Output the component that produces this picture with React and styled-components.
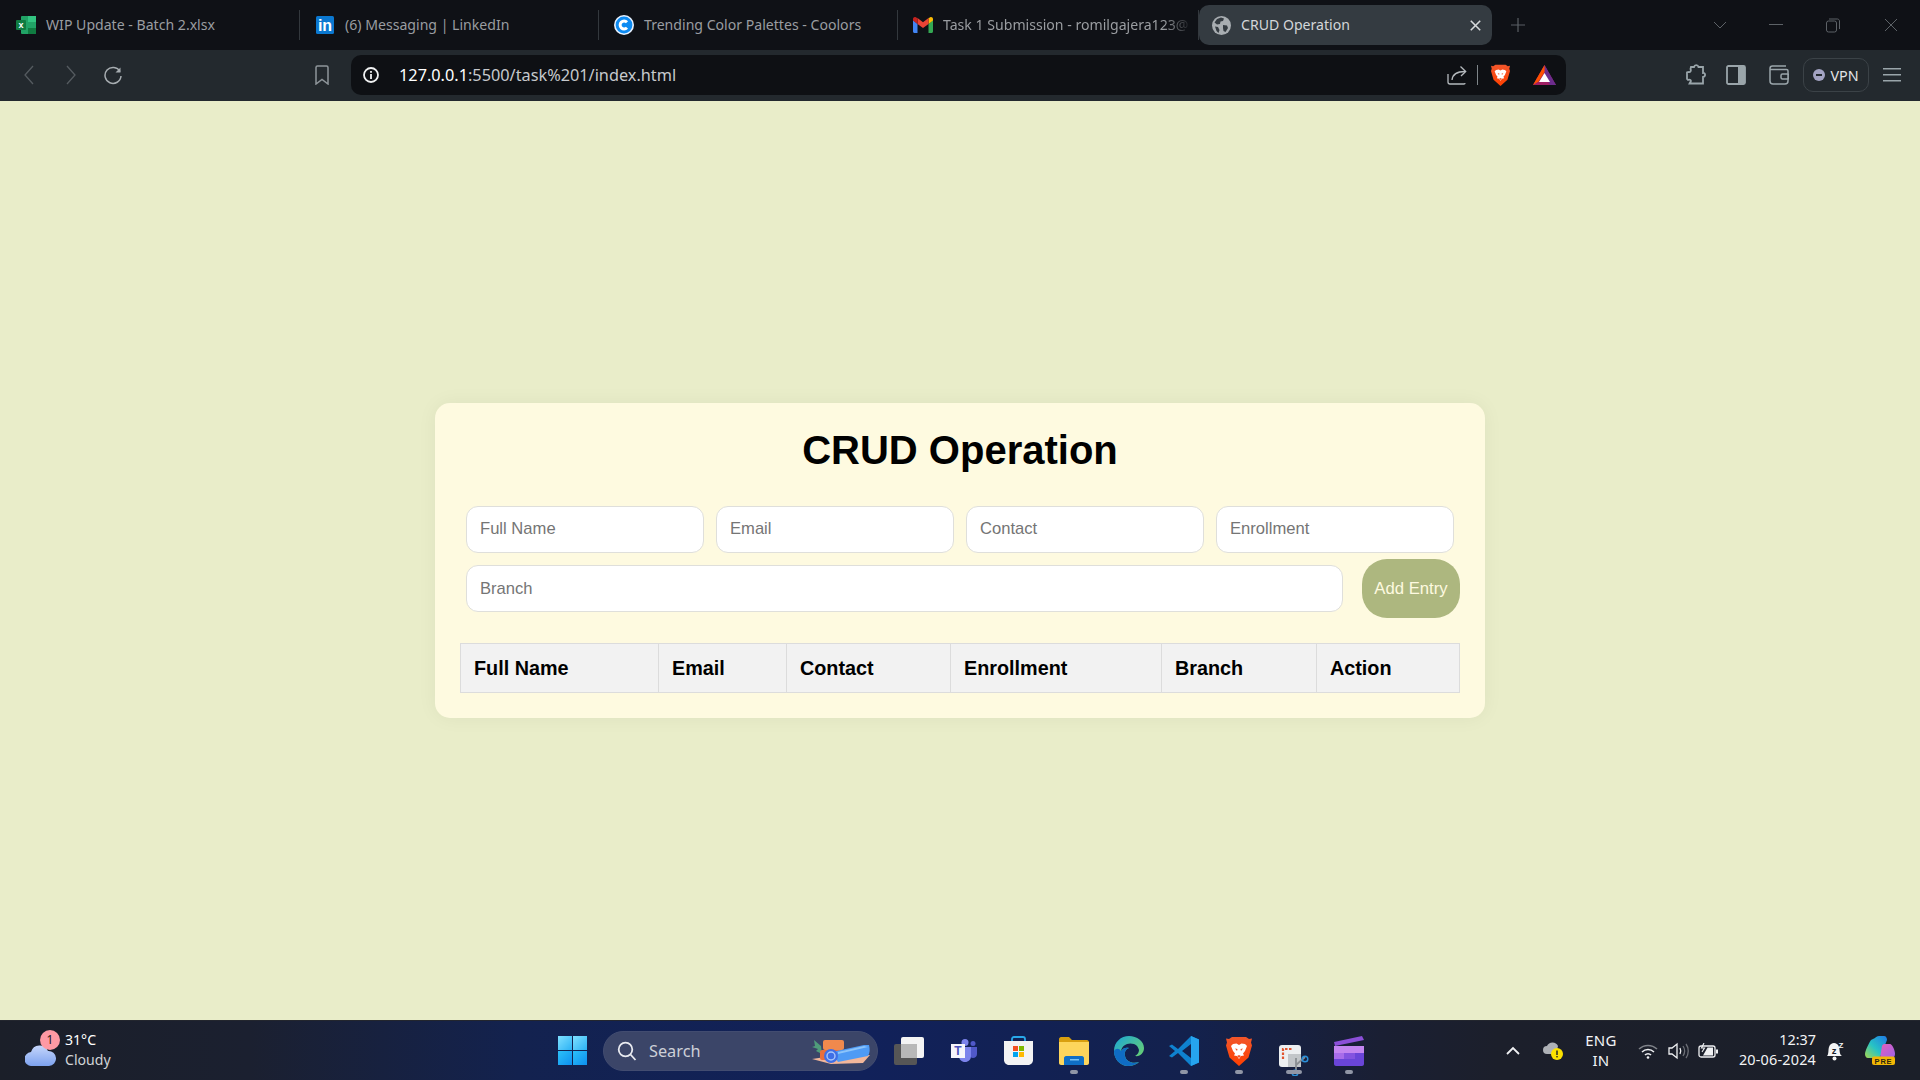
import React from "react";
import styled, { createGlobalStyle } from "styled-components";

const GlobalStyle = createGlobalStyle`
  html, body {
    margin: 0;
    padding: 0;
    height: 100%;
    overflow: hidden;
  }
  #root {
    height: 100%;
  }
  * {
    box-sizing: border-box;
  }
`;

const Screen = styled.div`
  width: 1920px;
  height: 1080px;
  display: flex;
  flex-direction: column;
  font-family: "Noto Sans", sans-serif;
`;

/* browser chrome */
const TabBar = styled.div`
  height: 50px;
  background-color: #0f1116;
  display: flex;
  align-items: center;
  flex-shrink: 0;
`;
const Tab = styled.div`
  position: relative;
  width: ${(p) => p.$w}px;
  height: 40px;
  padding-left: ${(p) => p.$pad || 15}px;
  display: flex;
  align-items: center;
  gap: 10px;
  color: #9a9da1;
  font-size: 14.1px;
  white-space: nowrap;
  &::after {
    content: "";
    position: absolute;
    right: 0;
    top: 5px;
    width: 1px;
    height: 30px;
    background-color: #33383d;
  }
`;
const ActiveTab = styled.div`
  width: 293px;
  height: 40px;
  padding: 0 11px 0 13px;
  border-radius: 10px;
  background-color: #343b41;
  color: #d3d6d9;
  font-size: 14.1px;
  display: flex;
  align-items: center;
  gap: 10px;
`;
const TabTitle = styled.span`
  flex: 1;
  margin-bottom: 2px;
`;
const PlainTitle = styled.span`
  margin-bottom: 2px;
`;
const FadedTitle = styled(PlainTitle)`
  -webkit-mask-image: linear-gradient(90deg, #000 90%, rgba(0, 0, 0, 0.15) 100%);
  mask-image: linear-gradient(90deg, #000 90%, rgba(0, 0, 0, 0.15) 100%);
`;
const Spacer = styled.div`
  flex: 1;
`;
const Slot = styled.div`
  width: ${(p) => p.$w}px;
  height: 100%;
  flex-shrink: 0;
  display: flex;
  align-items: center;
  justify-content: center;
`;
const ToolBar = styled.div`
  height: 51px;
  background-color: #23292e;
  padding: 0 0 1px 8px;
  display: flex;
  align-items: center;
  flex-shrink: 0;
`;
const NavGap = styled.div`
  width: 169px;
`;
const UrlBar = styled.div`
  width: 1215px;
  height: 40px;
  margin-left: 9px;
  border-radius: 10px;
  background-color: #0e1014;
  padding-left: 11px;
  display: flex;
  align-items: center;
`;
const InfoIcon = styled.div`
  width: 18px;
  display: flex;
  margin-right: 19px;
`;
const UrlText = styled.div`
  font-size: 16.3px;
  color: #c6c9cc;
  b {
    font-weight: 400;
    color: #ffffff;
  }
`;
const UrlTools = styled.div`
  display: flex;
  align-items: center;
  height: 100%;
  margin-right: 10px;
`;
const UrlDivider = styled.div`
  width: 1px;
  height: 20px;
  background-color: #7e8589;
  margin: 0 13px 0 10px;
`;
const VpnPill = styled.div`
  width: 66px;
  height: 34px;
  margin-left: 1px;
  border: 1px solid #3b4247;
  border-radius: 10px;
  display: flex;
  align-items: center;
  justify-content: center;
  gap: 5px;
  color: #e3e5e7;
  font-size: 14.3px;
`;
const VpnDot = styled.span`
  position: relative;
  width: 12px;
  height: 12px;
  border-radius: 50%;
  background-color: #a3a3c2;
  &::after {
    content: "";
    position: absolute;
    left: 3px;
    top: 5px;
    width: 6px;
    height: 2px;
    background-color: #23292e;
  }
`;

/* page */
const Main = styled.main`
  flex: 1;
  background-color: #e9edc9;
  display: flex;
  align-items: center;
  justify-content: center;
`;
const Card = styled.section`
  width: 1050px;
  padding: 25px;
  border-radius: 15px;
  background-color: #fefae0;
  box-shadow: 0 0 20px rgba(0, 0, 0, 0.05);
  font-family: "Liberation Sans", Arial, sans-serif;
`;
const Heading = styled.h1`
  margin: 0 0 34px;
  font-size: 40px;
  font-weight: 700;
  line-height: 44px;
  text-align: center;
  color: #000000;
`;
const FieldRow = styled.div`
  display: flex;
  gap: 12px;
  padding-left: 6px;
`;
const BranchRow = styled.div`
  display: flex;
  align-items: center;
  padding-left: 6px;
  margin-top: 6px;
`;
const Field = styled.input`
  width: ${(p) => p.$w}px;
  height: 47px;
  padding: 0 13px ${(p) => (p.$raised ? 2 : 0)}px;
  border: 1px solid #dfdfdb;
  border-radius: 12px;
  background-color: #ffffff;
  font-family: inherit;
  font-size: 16.6px;
  outline: none;
  &::placeholder {
    color: #757575;
    opacity: 1;
  }
`;
const AddButton = styled.button`
  width: 98px;
  height: 59px;
  margin-left: 19px;
  border: none;
  border-radius: 25px;
  background-color: #adb77f;
  color: #fefae0;
  font-family: inherit;
  font-size: 16.7px;
  padding: 0;
`;
const Table = styled.table`
  width: 999px;
  margin-top: 25px;
  border-collapse: collapse;
  table-layout: fixed;
`;
const HeadCell = styled.th`
  width: ${(p) => p.$w}px;
  height: 49px;
  padding: 0 13px;
  border: 1px solid #dcdcdc;
  background-color: #f2f2f2;
  color: #000000;
  font-size: 19.8px;
  font-weight: 700;
  text-align: left;
`;

/* taskbar */
const TaskBar = styled.footer`
  height: 60px;
  flex-shrink: 0;
  border-top: 1px solid #23262e;
  background: linear-gradient(90deg, #1b1f29 0%, #1b2030 13%, #13224f 27%, #11215a 45%, #13214d 62%, #1a1f33 72%, #1c1f2b 78%, #1b1f29 100%);
  display: flex;
  align-items: center;
`;
const WeatherBlock = styled.div`
  width: 558px;
  height: 100%;
  padding-left: 25px;
  display: flex;
  align-items: center;
  gap: 9px;
`;
const WeatherIcon = styled.div`
  position: relative;
  width: 31px;
  height: 30px;
  display: flex;
  align-items: flex-end;
`;
const WeatherBadge = styled.span`
  position: absolute;
  left: 15px;
  top: -6px;
  width: 20px;
  height: 20px;
  border-radius: 50%;
  background-color: #ff99a4;
  color: #1a1a1a;
  font-size: 12px;
  line-height: 20px;
  text-align: center;
`;
const WeatherText = styled.div`
  margin-bottom: 2px;
  font-size: 14.1px;
  line-height: 20px;
  color: #d0d3d6;
  b {
    display: block;
    font-weight: 400;
    color: #ffffff;
  }
`;
const StartIcon = styled.div`
  width: 29px;
  display: flex;
  margin-right: 16px;
`;
const SearchBox = styled.div`
  width: 275px;
  height: 40px;
  margin-right: 3px;
  padding-left: 13px;
  border: 1px solid #424c70;
  border-radius: 20px;
  background-color: #3b4568;
  color: #cdd0d8;
  font-size: 16.3px;
  display: flex;
  align-items: center;
  gap: 12px;
`;
const SearchArt = styled.div`
  margin-left: auto;
  margin-right: 7px;
  display: flex;
`;
const AppSlot = styled.div`
  position: relative;
  width: 55px;
  height: 100%;
  flex-shrink: 0;
  display: flex;
  align-items: ${(p) => (p.$low ? "flex-end" : "center")};
  justify-content: center;
  padding-bottom: ${(p) => (p.$low ? 4 : 0)}px;
  &::after {
    content: "";
    display: ${(p) => (p.$open ? "block" : "none")};
    position: absolute;
    left: 50%;
    bottom: 6px;
    width: ${(p) => (p.$wide ? 16 : 8)}px;
    height: 4px;
    margin-left: ${(p) => (p.$wide ? -8 : -4)}px;
    border-radius: 2px;
    background-color: #9096a6;
  }
`;
const Tray = styled.div`
  height: 100%;
  margin-right: 14px;
  display: flex;
  align-items: center;
`;
const TrayLang = styled.div`
  width: 56px;
  margin-bottom: 2px;
  color: #f2f3f5;
  font-size: 15px;
  line-height: 20px;
  letter-spacing: 0.3px;
  text-align: center;
`;
const Clock = styled.div`
  width: 89px;
  flex-shrink: 0;
  margin-bottom: 2px;
  color: #f2f3f5;
  font-size: 14.4px;
  line-height: 20px;
  text-align: right;
  white-space: nowrap;
  span {
    letter-spacing: 0.2px;
  }
`;

/* icons */
const ExcelIcon = () => (
  <svg width="20" height="18" viewBox="0 0 20 18">
    <rect x="5" y="0" width="15" height="18" rx="1" fill="#21a366" />
    <rect x="12" y="0" width="8" height="6" fill="#33c481" />
    <rect x="12" y="12" width="8" height="6" fill="#107c41" />
    <rect x="0" y="4" width="10" height="10" rx="1" fill="#107c41" />
    <text x="5" y="12" fontSize="9" fontWeight="700" textAnchor="middle" fill="#fff" fontFamily="Liberation Sans">x</text>
  </svg>
);
const LinkedinIcon = () => (
  <svg width="18" height="18" viewBox="0 0 18 18" style={{ marginRight: 1 }}>
    <rect width="18" height="18" rx="1.5" fill="#0b78d0" />
    <text x="9" y="15" fontSize="16" fontWeight="700" textAnchor="middle" fill="#fff" fontFamily="Liberation Sans">in</text>
  </svg>
);
const CoolorsIcon = () => (
  <svg width="20" height="20" viewBox="0 0 20 20">
    <circle cx="10" cy="10" r="10" fill="#e8f2ff" />
    <circle cx="10" cy="10" r="8.4" fill="#0d8bf2" />
    <path d="M13 7.2a4 4 0 1 0 0 5.6" fill="none" stroke="#fff" strokeWidth="3" />
  </svg>
);
const GmailIcon = () => (
  <svg width="20" height="16" viewBox="0 0 20 16">
    <path d="M0 3v11.5c0 .8.7 1.5 1.5 1.5H4.5V7z" fill="#4285f4" />
    <path d="M20 3v11.5c0 .8-.7 1.5-1.5 1.5H15.500V7z" fill="#34a853" />
    <path d="M15.500 1v6L20 3.500V2C20 .3 18 -.5 17 .5z" fill="#fbbc04" />
    <path d="M4.500 7V1l5.500 4.200L15.500 1v6L10 11z" fill="#ea4335" />
    <path d="M0 2v1.500L4.500 7V1L3 .5C2 -.5 0 .3 0 2z" fill="#c5221f" />
  </svg>
);
const GlobeIcon = () => (
  <svg width="19" height="19" viewBox="0 0 19 19">
    <circle cx="9.500" cy="9.500" r="9.500" fill="#a8adb1" />
    <path d="M5 3l4-1.500 3 1-1 2.500-2.500.5-.5 2.500-3 .5-2.500-2zM11 9l4 .5 1 2.500-2.500 4-2-1-.5-3zM3 10.500l3 .5 1.500 3-1 3-2-2z" fill="#343b41" />
  </svg>
);
const Chevron = ({ dir, color }) => (
  <svg width="12" height="20" viewBox="0 0 12 20" fill="none" stroke={color} strokeWidth="1.300">
    <path d={dir === "left" ? "M10 1 2 10l8 9" : "M2 1l8 9-8 9"} />
  </svg>
);
const ReloadIcon = () => (
  <svg width="20" height="20" viewBox="0 0 20 20" fill="none" stroke="#a7adb1" strokeWidth="1.500">
    <path d="M17 6.500A8 8 0 1 0 18 11" />
    <path d="M17.500 2.500v5h-5" fill="#a7adb1" stroke="none" />
  </svg>
);
const BookmarkIcon = () => (
  <svg width="14" height="20" viewBox="0 0 14 20" fill="none" stroke="#8e959a" strokeWidth="1.500">
    <path d="M1 2.500C1 1.500 1.700 1 2.500 1h9c.8 0 1.500.5 1.500 1.500V19l-6-4.500L1 19z" />
  </svg>
);
const InfoGlyph = () => (
  <svg width="18" height="18" viewBox="0 0 18 18" fill="none">
    <circle cx="9" cy="9" r="7" stroke="#f0f1f2" strokeWidth="1.800" />
    <rect x="8.100" y="8" width="1.800" height="5" fill="#f0f1f2" />
    <rect x="8.100" y="5" width="1.800" height="1.800" fill="#f0f1f2" />
  </svg>
);
const ShareIcon = () => (
  <svg width="20" height="20" viewBox="0 0 20 20" fill="none" stroke="#b4b9bd" strokeWidth="1.300">
    <path d="M1 9v8c0 1.200.8 2 2 2h14c.6 0 1-.4 1-1" />
    <path d="M5 15c.5-5 4-8.500 13-8.500" />
    <path d="M13.500 1.500 18.700 6.500 14 11" />
  </svg>
);
const BraveIcon = ({ w, h }) => (
  <svg width={w} height={h} viewBox="0 0 26 30">
    <defs>
      <linearGradient id={`brave${w}`} x1="0" y1="0" x2="0" y2="1">
        <stop offset="0" stopColor="#f1562b" />
        <stop offset="1" stopColor="#ff4000" />
      </linearGradient>
    </defs>
    <path d="M6 1h14l3 2 3-.5-1 4 1 3-3.500 12L13 30 3.500 21.500 0 9.500l1-3-1-4 3 .5z" fill={`url(#brave${w})`} />
    <path d="M7 8l3.500-.5L13 9l2.500-1.500L19 8l2 2-2 5-2 2.500 1 2-3 .5-2 3-2-3-3-.5 1-2L7 15l-2-5z" fill="#fff" />
    <path d="M9 12.500l2.500.5-.5 2zM17 12.500l-2.500.5.5 2zM11 20l2-1 2 1-2 2z" fill="#f1562b" />
  </svg>
);
const BatIcon = () => (
  <svg width="23" height="20" viewBox="0 0 23 20">
    <path d="M11.500 0 23 20H0z" fill="#9e1f63" />
    <path d="M11.500 0 23 20l-6-0-5.500-10z" fill="#662d91" opacity="0.900" />
    <path d="M11.500 0 0 20l5.500-3.500L11.500 7z" fill="#ff5000" />
    <path d="M11.500 8 17 17H6z" fill="#fff" />
  </svg>
);
const PuzzleIcon = () => (
  <svg width="21" height="22" viewBox="0 0 21 22" fill="none" stroke="#9aa5aa" strokeWidth="1.800">
    <path d="M5 3h3c.5-2.500 4-2.500 4.500 0H17v6c2.500-.5 3 3.500 0 4v6.500H3.500l.5-1c2-2 0-3.500-2-2.500L1 15V8.500l1.500-.5c2 .5 3-1.500 2-3z" />
  </svg>
);
const SidebarIcon = () => (
  <svg width="20" height="20" viewBox="0 0 20 20">
    <rect x="1" y="1" width="18" height="18" rx="1.500" fill="none" stroke="#9aa5aa" strokeWidth="1.800" />
    <rect x="12" y="1" width="7" height="18" fill="#9aa5aa" />
  </svg>
);
const WalletIcon = () => (
  <svg width="20" height="20" viewBox="0 0 20 20" fill="none" stroke="#9aa5aa" strokeWidth="1.500">
    <path d="M17 1H3.500C2 1 1 2 1 3.500V16c0 1.500 1 3 3 3h12c2 0 3-1 3-3V6c0-1-.8-1.500-1.500-1.500H1.500" />
    <rect x="12" y="9" width="8" height="5" rx="1.500" />
  </svg>
);
const MenuIcon = () => (
  <svg width="18" height="14" viewBox="0 0 18 14" fill="#9aa5aa">
    <rect width="18" height="1.500" />
    <rect y="6" width="18" height="1.500" />
    <rect y="12" width="18" height="1.500" />
  </svg>
);
const CloseSmall = ({ color, size, weight }) => (
  <svg width={size} height={size} viewBox="0 0 14 14" fill="none" stroke={color} strokeWidth={weight}>
    <path d="M1 1l12 12M13 1 1 13" />
  </svg>
);
const PlusIcon = () => (
  <svg width="14" height="14" viewBox="0 0 14 14" stroke="#5a5f64" strokeWidth="1.200">
    <path d="M7 0v14M0 7h14" />
  </svg>
);
const WindowDown = () => (
  <svg width="14" height="8" viewBox="0 0 14 8" fill="none" stroke="#5d6267" strokeWidth="1">
    <path d="M1 1l6 6 6-6" />
  </svg>
);
const WindowMin = () => (
  <svg width="14" height="2" viewBox="0 0 14 2"><rect width="14" height="1" fill="#5d6267" /></svg>
);
const WindowRestore = () => (
  <svg width="14" height="15" viewBox="0 0 14 15" fill="none" stroke="#5d6267" strokeWidth="1">
    <rect x=".5" y="3" width="10" height="11" rx="2" />
    <path d="M3 1h8.500c1 0 2 1 2 2v8" />
  </svg>
);

const CloudIcon = () => (
  <svg width="31" height="22" viewBox="0 0 31 22">
    <defs>
      <linearGradient id="cloudFill" x1="0" y1="0" x2="0" y2="1">
        <stop offset="0" stopColor="#c6d6fb" />
        <stop offset="1" stopColor="#7da2ef" />
      </linearGradient>
    </defs>
    <path d="M7 22a7 7 0 0 1-1-14 9 9 0 0 1 17-1 7.500 7.500 0 0 1 1 15z" fill="url(#cloudFill)" />
  </svg>
);
const WindowsIcon = () => (
  <svg width="29" height="29" viewBox="0 0 29 29">
    <defs>
      <linearGradient id="winTop" x1="0" y1="0" x2="1" y2="1">
        <stop offset="0" stopColor="#7fe0ff" />
        <stop offset="1" stopColor="#2bb2f5" />
      </linearGradient>
      <linearGradient id="winBottom" x1="0" y1="0" x2="1" y2="1">
        <stop offset="0" stopColor="#2cc0f8" />
        <stop offset="1" stopColor="#0d90f0" />
      </linearGradient>
    </defs>
    <rect width="14" height="14" fill="url(#winTop)" />
    <rect x="15" width="14" height="14" fill="url(#winTop)" />
    <rect y="15" width="14" height="14" fill="url(#winBottom)" />
    <rect x="15" y="15" width="14" height="14" fill="url(#winBottom)" />
  </svg>
);
const SearchGlyph = () => (
  <svg width="20" height="20" viewBox="0 0 20 20" fill="none" stroke="#e8eaf0" strokeWidth="1.800">
    <circle cx="8.500" cy="8.500" r="6.800" />
    <path d="M13.500 13.500 18.500 19" />
  </svg>
);
const SearchArtIcon = () => (
  <svg width="58" height="26" viewBox="0 0 58 26">
    <path d="M0 21l20-3 38-1-7 8-32 1z" fill="#f3b79a" />
    <path d="M2 2l7 6 1 8-6-3 2-2-6-2 3-1z" fill="#4f9c7a" />
    <rect x="11" y="2" width="21" height="10" rx="2" fill="#f0894d" />
    <rect x="8" y="12" width="22" height="10" rx="2" fill="#e86f3d" />
    <path d="M20 14 52 7l5 0c1 4 1 8-1 11l-30 6z" fill="#4f9bf5" />
    <path d="M26 14 52 8l4 1-30 7z" fill="#8cc4fa" />
    <circle cx="19" cy="18" r="7" fill="#3f6fe6" />
    <circle cx="19" cy="18" r="4" fill="none" stroke="#a9c6fb" strokeWidth="1.400" />
  </svg>
);
const TaskViewIcon = () => (
  <svg width="30" height="28" viewBox="0 0 30 28">
    <rect y="7" width="23" height="21" rx="2" fill="#565656" />
    <rect x="7" width="23" height="21" rx="2" fill="#f4f4f4" />
    <rect x="7" y="7" width="16" height="14" fill="#b8b8b8" />
  </svg>
);
const TeamsIcon = () => (
  <svg width="26" height="23" viewBox="0 0 26 23">
    <circle cx="14" cy="3.500" r="3.500" fill="#7b83eb" />
    <circle cx="22" cy="4.500" r="2.500" fill="#5059c9" />
    <path d="M18 8h8v7c0 2.500-2 4-4 4s-4-2-4-4z" fill="#5059c9" />
    <path d="M8 8h12v9c0 3.500-2.500 6-6 6s-6-2.500-6-6z" fill="#7b83eb" />
    <rect y="5" width="14" height="14" fill="#f5f5fb" />
    <text x="7" y="16" fontSize="12" fontWeight="700" textAnchor="middle" fill="#4b53bc" fontFamily="Liberation Sans">T</text>
  </svg>
);
const StoreIcon = () => (
  <svg width="29" height="29" viewBox="0 0 29 29">
    <path d="M8 7V3c0-1 .8-2 2-2h9c1.200 0 2 1 2 2v4" fill="none" stroke="#28a8ea" strokeWidth="1.800" />
    <path d="M0 5h29v19c0 2.500-2 5-5 5H5c-3 0-5-2.500-5-5z" fill="#f3f3f3" />
    <rect x="9" y="10" width="5" height="5" fill="#f25022" />
    <rect x="15" y="10" width="5" height="5" fill="#7fba00" />
    <rect x="9" y="16" width="5" height="5" fill="#00a4ef" />
    <rect x="15" y="16" width="5" height="5" fill="#ffb900" />
  </svg>
);
const ExplorerIcon = () => (
  <svg width="30" height="28" viewBox="0 0 30 28">
    <path d="M0 2c0-1 1-2 2-2h8l3 3h15c1 0 2 1 2 2v5H0z" fill="#d99f0f" />
    <path d="M0 5h30v21c0 1-1 2-2 2H2c-1 0-2-1-2-2z" fill="#fdd55c" />
    <path d="M5 21c0-1 1-2 2-2h16c1 0 2 1 2 2v7H5z" fill="#0f6fc6" />
    <rect x="11" y="22" width="9" height="1.500" fill="#78c3f5" />
  </svg>
);
const EdgeIcon = () => (
  <svg width="30" height="30" viewBox="0 0 30 30">
    <defs>
      <linearGradient id="edgeTop" x1="0" y1="0" x2="1" y2="1">
        <stop offset="0" stopColor="#1aa7d8" />
        <stop offset="1" stopColor="#7ad85b" />
      </linearGradient>
    </defs>
    <path d="M15 0C7 0 0 6 0 15c0 8 6 15 14 15 5 0 9-2 11-4-6 2-13 0-14-6-1-4 1-7 4-8-3-1-6 0-8 3 1-6 7-9 13-7 3 1 4 3 5 6 0 3-2 5-4 6 5 1 9-3 9-8C30 5 23 0 15 0z" fill="url(#edgeTop)" />
    <path d="M0 15c0 8 6 15 14 15 5 0 9-2 11-4-6 2-13 0-14-6-1-4 1-7 4-8-3-1-6 0-8 3C5 12 2 12 0 15z" fill="#0f6cc4" />
  </svg>
);
const VsCodeIcon = () => (
  <svg width="30" height="30" viewBox="0 0 30 30">
    <path d="M22 0 9 13 3 8.500 0 10l6 5-6 5 3 1.500L9 17l13 13 8-3.500V3.500zM22 8v14l-9-7z" fill="#0f82cf" />
    <path d="M22 0l8 3.500v23L22 30z" fill="#26a4ee" />
  </svg>
);
const SnipIcon = () => (
  <svg width="30" height="31" viewBox="0 0 30 31">
    <rect width="22" height="22" rx="3" fill="#eceff1" />
    <path d="M4 14V4h10" fill="none" stroke="#e2552f" strokeWidth="2.200" strokeDasharray="2.500 1.500" />
    <path d="M9 9h13v13H9z" fill="#c2c6c9" />
    <path d="M17 13v12M17 20l9-8" stroke="#8a8f93" strokeWidth="1.800" />
    <circle cx="26" cy="14" r="2.800" fill="none" stroke="#2a8fd8" strokeWidth="1.500" />
    <circle cx="16" cy="28" r="2.800" fill="none" stroke="#2a8fd8" strokeWidth="1.500" />
  </svg>
);
const ClapperIcon = () => (
  <svg width="30" height="30" viewBox="0 0 30 30">
    <path d="M0 6 28 0l2 4L1 10z" fill="#8b4fd8" />
    <path d="M0 10h30v18c0 1-1 2-2 2H2c-1 0-2-1-2-2z" fill="#6a45d8" />
    <path d="M0 10h30v7H0z" fill="#c385f0" />
    <path d="M0 17h10v6H0z" fill="#a86cea" />
    <path d="M10 17h11v6H10z" fill="#8453e0" />
  </svg>
);
const CaretIcon = () => (
  <svg width="14" height="9" viewBox="0 0 14 9" fill="none" stroke="#f0f1f3" strokeWidth="1.800">
    <path d="M1 8l6-6 6 6" />
  </svg>
);
const SyncWarnIcon = () => (
  <svg width="20" height="18" viewBox="0 0 20 18">
    <path d="M4 12a4 4 0 0 1 0-8 6 6 0 0 1 11 0l-2 8z" fill="#aeb1b6" />
    <circle cx="14" cy="12" r="6" fill="#fce100" />
    <rect x="13.300" y="8.500" width="1.400" height="4.500" fill="#1b1f29" />
    <rect x="13.300" y="14" width="1.400" height="1.400" fill="#1b1f29" />
  </svg>
);
const WifiIcon = () => (
  <svg width="20" height="16" viewBox="0 0 20 16" fill="none" strokeWidth="1.500">
    <path d="M1 6a13 13 0 0 1 18 0" stroke="#7e8188" />
    <path d="M4 9a8.500 8.500 0 0 1 12 0" stroke="#f0f1f3" />
    <path d="M7 12a4 4 0 0 1 6 0" stroke="#f0f1f3" />
    <circle cx="10" cy="14.500" r="1.300" fill="#f0f1f3" stroke="none" />
  </svg>
);
const VolumeIcon = () => (
  <svg width="21" height="18" viewBox="0 0 21 18" fill="none" strokeWidth="1.300">
    <path d="M1 6h3l5-4v14l-5-4H1z" stroke="#f0f1f3" />
    <path d="M12 6c1 2 1 4 0 6" stroke="#f0f1f3" />
    <path d="M15 4c2 3 2 7 0 10M18 2c3 4 3 10 0 14" stroke="#6c6f76" />
  </svg>
);
const BatteryIcon = () => (
  <svg width="21" height="16" viewBox="0 0 21 16" fill="none" stroke="#f0f1f3" strokeWidth="1.300">
    <rect x="1" y="3" width="16" height="11" rx="2" />
    <path d="M19 6.500v4" strokeWidth="2" />
    <path d="M5 12.500l4.500-8h5.500v8z" fill="#f0f1f3" stroke="none" />
    <path d="M6 0 3.500 5h3L4 9" strokeWidth="1.100" />
  </svg>
);
const BellIcon = () => (
  <svg width="18" height="20" viewBox="0 0 18 20">
    <path d="M1 15c2-2 1-6 2-9s3-4 5-4 4 1 5 4 0 7 3 9z" fill="#f4f5f6" />
    <circle cx="8.500" cy="17.500" r="2" fill="#f4f5f6" />
    <text x="8" y="12.500" fontSize="9.500" fontWeight="700" textAnchor="middle" fill="#1b1f29" fontFamily="Liberation Sans">z</text>
    <text x="15" y="6.500" fontSize="8" fontWeight="700" textAnchor="middle" fill="#f4f5f6" fontFamily="Liberation Sans">Z</text>
  </svg>
);
const CopilotIcon = () => (
  <svg width="30" height="29" viewBox="0 0 30 29">
    <defs>
      <linearGradient id="copilotA" x1="0" y1="1" x2="1" y2="0">
        <stop offset="0" stopColor="#a6d84e" />
        <stop offset="0.450" stopColor="#27c3c4" />
        <stop offset="1" stopColor="#1f7ae8" />
      </linearGradient>
      <linearGradient id="copilotB" x1="0" y1="0" x2="1" y2="1">
        <stop offset="0" stopColor="#e85fb8" />
        <stop offset="1" stopColor="#9a62ea" />
      </linearGradient>
    </defs>
    <path d="M10 2c1-1 2-2 4-2h5c2 0 3 2 3 4l-6 15c-1 2-2 3-4 3H3c-2 0-3-2-3-4 0-3 4-11 6-14z" fill="url(#copilotA)" />
    <path d="M17 10c1-2 2-2 3-2h5c2 0 5 6 5 10 0 2-1 4-3 4H15z" fill="url(#copilotB)" />
    <rect x="7" y="20.500" width="23" height="8.500" rx="2" fill="#f2b705" />
    <text x="18.500" y="27.500" fontSize="7.500" fontWeight="700" textAnchor="middle" fill="#2a2410" fontFamily="Liberation Sans" letterSpacing="0.800">PRE</text>
  </svg>
);

const App = () => {
  return (
    <Screen>
      <GlobalStyle />
      <TabBar>
        <Tab $w={300} $pad={16}>
          <ExcelIcon />
          <PlainTitle>WIP Update - Batch 2.xlsx</PlainTitle>
        </Tab>
        <Tab $w={299} $pad={16}>
          <LinkedinIcon />
          <PlainTitle>(6) Messaging | LinkedIn</PlainTitle>
        </Tab>
        <Tab $w={299}>
          <CoolorsIcon />
          <PlainTitle>Trending Color Palettes - Coolors</PlainTitle>
        </Tab>
        <Tab $w={301}>
          <GmailIcon />
          <FadedTitle>Task 1 Submission - romilgajera123@</FadedTitle>
        </Tab>
        <ActiveTab>
          <GlobeIcon />
          <TabTitle>CRUD Operation</TabTitle>
          <CloseSmall color="#d7dadc" size={11} weight={2} />
        </ActiveTab>
        <Slot $w={52}>
          <PlusIcon />
        </Slot>
        <Spacer />
        <Slot $w={56}>
          <WindowDown />
        </Slot>
        <Slot $w={56}>
          <WindowMin />
        </Slot>
        <Slot $w={58}>
          <WindowRestore />
        </Slot>
        <Slot $w={58}>
          <CloseSmall color="#5d6267" size={14} weight={1} />
        </Slot>
      </TabBar>
      <ToolBar>
        <Slot $w={41}>
          <Chevron dir="left" color="#555b60" />
        </Slot>
        <Slot $w={44}>
          <Chevron dir="right" color="#555b60" />
        </Slot>
        <Slot $w={40}>
          <ReloadIcon />
        </Slot>
        <NavGap />
        <Slot $w={40}>
          <BookmarkIcon />
        </Slot>
        <UrlBar>
          <InfoIcon>
            <InfoGlyph />
          </InfoIcon>
          <UrlText>
            <b>127.0.0.1</b>:5500/task%201/index.html
          </UrlText>
          <Spacer />
          <UrlTools>
            <ShareIcon />
            <UrlDivider />
            <BraveIcon w={19} h={22} />
            <Slot $w={23} />
            <BatIcon />
          </UrlTools>
        </UrlBar>
        <Spacer />
        <Slot $w={40}>
          <PuzzleIcon />
        </Slot>
        <Slot $w={40}>
          <SidebarIcon />
        </Slot>
        <Slot $w={46}>
          <WalletIcon />
        </Slot>
        <VpnPill>
          <VpnDot />
          VPN
        </VpnPill>
        <Slot $w={46}>
          <MenuIcon />
        </Slot>
        <Slot $w={5} />
      </ToolBar>

      <Main>
        <Card>
          <Heading>CRUD Operation</Heading>
          <FieldRow>
            <Field $w={238} $raised placeholder="Full Name" />
            <Field $w={238} $raised placeholder="Email" />
            <Field $w={238} $raised placeholder="Contact" />
            <Field $w={238} $raised placeholder="Enrollment" />
          </FieldRow>
          <BranchRow>
            <Field $w={877} placeholder="Branch" />
            <AddButton>Add Entry</AddButton>
          </BranchRow>
          <Table>
            <thead>
              <tr>
                <HeadCell $w={198}>Full Name</HeadCell>
                <HeadCell $w={128}>Email</HeadCell>
                <HeadCell $w={164}>Contact</HeadCell>
                <HeadCell $w={211}>Enrollment</HeadCell>
                <HeadCell $w={155}>Branch</HeadCell>
                <HeadCell $w={143}>Action</HeadCell>
              </tr>
            </thead>
          </Table>
        </Card>
      </Main>

      <TaskBar>
        <WeatherBlock>
          <WeatherIcon>
            <CloudIcon />
            <WeatherBadge>1</WeatherBadge>
          </WeatherIcon>
          <WeatherText>
            <b>31°C</b>
            Cloudy
          </WeatherText>
        </WeatherBlock>
        <StartIcon>
          <WindowsIcon />
        </StartIcon>
        <SearchBox>
          <SearchGlyph />
          Search
          <SearchArt>
            <SearchArtIcon />
          </SearchArt>
        </SearchBox>
        <AppSlot>
          <TaskViewIcon />
        </AppSlot>
        <AppSlot>
          <TeamsIcon />
        </AppSlot>
        <AppSlot>
          <StoreIcon />
        </AppSlot>
        <AppSlot $open>
          <ExplorerIcon />
        </AppSlot>
        <AppSlot>
          <EdgeIcon />
        </AppSlot>
        <AppSlot $open>
          <VsCodeIcon />
        </AppSlot>
        <AppSlot $open>
          <BraveIcon w={26} h={30} />
        </AppSlot>
        <AppSlot $open $wide $low>
          <SnipIcon />
        </AppSlot>
        <AppSlot $open>
          <ClapperIcon />
        </AppSlot>
        <Spacer />
        <Tray>
          <Slot $w={40}>
            <CaretIcon />
          </Slot>
          <Slot $w={40}>
            <SyncWarnIcon />
          </Slot>
          <TrayLang>
            ENG
            <br />
            IN
          </TrayLang>
          <Slot $w={38}>
            <WifiIcon />
          </Slot>
          <Slot $w={22}>
            <VolumeIcon />
          </Slot>
          <Slot $w={38}>
            <BatteryIcon />
          </Slot>
          <Clock>
            12:37
            <br />
            <span>20-06-2024</span>
          </Clock>
          <Slot $w={38}>
            <BellIcon />
          </Slot>
          <Slot $w={52}>
            <CopilotIcon />
          </Slot>
        </Tray>
      </TaskBar>
    </Screen>
  );
};

export default App;
